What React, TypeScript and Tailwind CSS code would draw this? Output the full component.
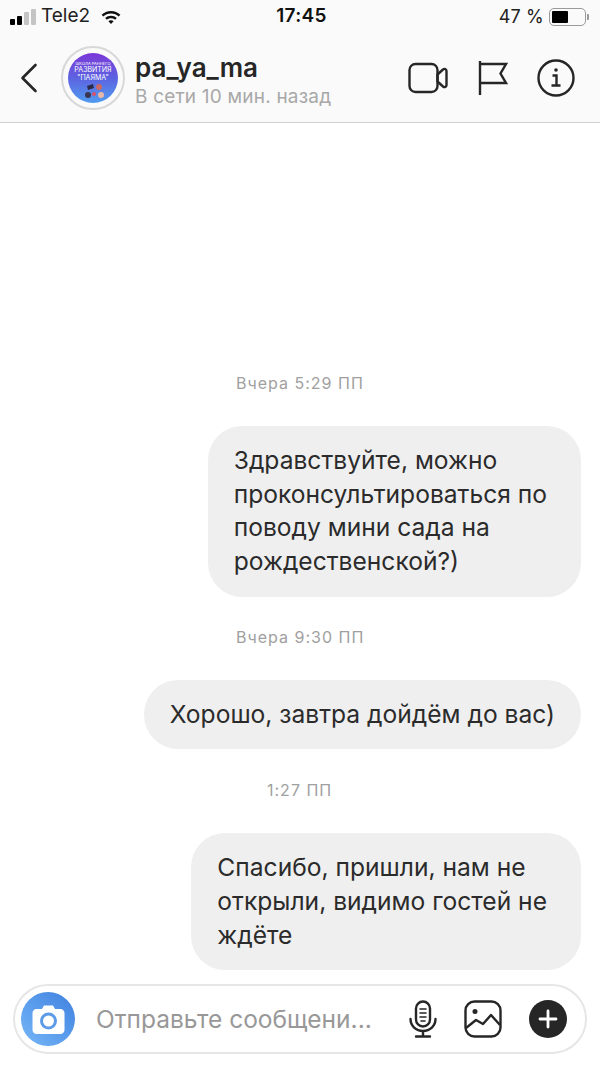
const FONT = "font-['Inter','Liberation_Sans',sans-serif]"

function Signal() {
  return (
    <div className="flex items-end gap-[2px]">
      <div className="w-[5px] h-[6px] rounded-[1px] bg-black" />
      <div className="w-[5px] h-[9px] rounded-[1px] bg-black" />
      <div className="w-[5px] h-[13px] rounded-[1px] bg-[#c4c4c4]" />
      <div className="w-[5px] h-[16px] rounded-[1px] bg-[#c4c4c4]" />
    </div>
  )
}

function Wifi() {
  return (
    <svg width="22" height="16" viewBox="0 0 22 16" fill="#111">
      <path d="M11 2c3.600 0 6.900 1.400 9.400 3.700l-1.700 1.800C16.700 5.600 14 4.500 11 4.500S5.300 5.600 3.300 7.500L1.600 5.700C4.100 3.400 7.400 2 11 2z" />
      <path d="M11 6.800c2.200 0 4.200.8 5.800 2.200l-1.700 1.800c-1.100-1-2.500-1.500-4.100-1.500s-3 .5-4.100 1.500L5.200 9C6.800 7.600 8.800 6.800 11 6.800z" />
      <path d="M11 11.300c1 0 1.900.4 2.600 1L11 15l-2.600-2.700c.7-.6 1.600-1 2.600-1z" />
    </svg>
  )
}

function StatusBar() {
  return (
    <div className="h-[33px] grid grid-cols-3 items-center pl-[10px] pr-[11px]">
      <div className="flex items-center gap-[5px]">
        <Signal />
        <span className="text-[19px] text-[#222]">Tele2</span>
        <div className="ml-[5px]"><Wifi /></div>
      </div>
      <span className="text-center pl-[4px] text-[19px] font-semibold text-[#111] tracking-[0.3px]">17:45</span>
      <div className="flex items-center justify-end gap-[5px]">
        <span className="text-[18px] text-[#222] tracking-[0.2px]">47 %</span>
        <div className="flex items-center gap-[1px]">
          <div className="w-[37px] h-[18px] rounded-[5px] border border-[#9a9a9a] p-[2px]">
            <div className="w-[16px] h-full rounded-[1px] bg-black" />
          </div>
          <div className="w-[2px] h-[6px] rounded-r-[1px] bg-[#9a9a9a]" />
        </div>
      </div>
    </div>
  )
}

function Avatar() {
  return (
    <div className="w-[64px] h-[64px] rounded-full border-2 border-[#d8d8d8] flex items-center justify-center shrink-0">
      <div className="w-[50px] h-[50px] rounded-full bg-gradient-to-b from-[#7a35d8] via-[#5b62e0] to-[#4f9cf0] flex flex-col items-center pt-[8px] text-white overflow-hidden">
        <span className="text-[4px] leading-[5px] whitespace-nowrap">ШКОЛА РАННЕГО</span>
        <span className="text-[7px] leading-[8px] whitespace-nowrap">РАЗВИТИЯ</span>
        <span className="text-[7px] leading-[8px] whitespace-nowrap">"ПАЯМА"</span>
        <svg width="30" height="16" viewBox="0 0 30 16" className="mt-[1px]">
          <circle cx="10" cy="12" r="3" fill="#3a3550" />
          <circle cx="16" cy="11" r="2" fill="#d9506a" />
          <circle cx="23" cy="12" r="3" fill="#e7b8a8" />
          <path d="M9 3l6-2 1 4-6 2z" fill="#2c2a48" />
          <circle cx="21" cy="4" r="3" fill="#c76a6a" />
        </svg>
      </div>
    </div>
  )
}

function Header() {
  return (
    <div className="h-[90px] flex items-start border-b border-[#cfcfcf] pl-[20px] pr-[25px] pt-[13px]">
      <svg width="18" height="32" viewBox="0 0 18 32" fill="none" stroke="#262626" strokeWidth="2.600" strokeLinecap="round" strokeLinejoin="round" className="mt-[16px] mr-[23px] shrink-0">
        <path d="M15.500 3 2.500 16l13 13" />
      </svg>
      <Avatar />
      <div className="ml-[10px] flex-1 min-w-0">
        <p className="text-[26px] leading-[32px] mt-[6px] font-semibold text-[#262626]">pa_ya_ma</p>
        <p className="text-[19px] leading-[24px] mt-[1px] text-[#a8a8a8] tracking-[0.2px] whitespace-nowrap">В сети 10 мин. назад</p>
      </div>
      <div className="flex items-center mt-[6px] h-[52px]">
        <svg width="40" height="32" viewBox="0 0 40 32" fill="none" stroke="#262626" strokeWidth="2.400" strokeLinejoin="round">
          <rect x="1.500" y="2" width="28" height="28" rx="6" />
          <path d="M29.500 12.500 35 7.500c1.500-1.200 3.500-.5 3.500 1.500v14c0 2-2 2.700-3.500 1.500l-5.500-5z" />
        </svg>
        <svg width="30" height="34" viewBox="0 0 30 34" fill="none" stroke="#262626" strokeWidth="2.400" className="ml-[30px]">
          <path d="M2 0v34M2 3h26l-5.500 9.500L28 22H2" />
        </svg>
        <svg width="38" height="38" viewBox="0 0 38 38" fill="none" stroke="#262626" strokeWidth="2.400" className="ml-[29px]">
          <circle cx="19" cy="19" r="17.500" />
          <circle cx="19" cy="11" r="1.800" fill="#262626" stroke="none" />
          <path d="M15.500 16.500h4v10M14.500 26.500h9" />
        </svg>
      </div>
    </div>
  )
}

function Time({ label, className }: { label: string; className: string }) {
  return <p className={`text-[16px] leading-[20px] tracking-[1px] text-[#a0a0a0] ${className}`}>{label}</p>
}

function Bubble({ lines, className }: { lines: string[]; className: string }) {
  return (
    <div className={`self-end rounded-[34px] bg-[#efefef] pl-[26px] py-[18px] text-[24.600px] leading-[33.670px] text-[#2b2b2b] ${className}`}>
      {lines.map((l) => (
        <p key={l} className="whitespace-nowrap">{l}</p>
      ))}
    </div>
  )
}

function Composer() {
  return (
    <div className="mx-[13px] mt-[14px] h-[70px] rounded-[35px] border-2 border-[#e6e6e6] flex items-center pl-[6px] pr-[18px]">
      <div className="w-[54px] h-[54px] rounded-full bg-gradient-to-tr from-[#76b7f8] to-[#3f80df] flex items-center justify-center shrink-0">
        <svg width="33" height="29" viewBox="0 0 33 29">
          <path d="M4.500 4H10l2-3.500h9L23 4h5.500c2.200 0 4 1.800 4 4v17c0 2.200-1.800 4-4 4h-24c-2.200 0-4-1.800-4-4V8c0-2.200 1.800-4 4-4z" fill="#fff" />
          <circle cx="16.500" cy="16" r="7" fill="none" stroke="#5d9be8" strokeWidth="3" />
        </svg>
      </div>
      <span className="ml-[21px] flex-1 text-[24.500px] text-[#989898] whitespace-nowrap">Отправьте сообщени...</span>
      <svg width="28" height="38" viewBox="0 0 28 38" fill="none" stroke="#262626" strokeWidth="2.400" strokeLinecap="round">
        <rect x="7" y="1.500" width="14" height="25" rx="7" />
        <path d="M1.500 19c0 7 5.500 12 12.500 12s12.500-5 12.500-12M14 31v5M7 36.500h14" />
        <path d="M11 9h6M11 13h6M11 17h6M12 21h4" strokeWidth="1.600" />
      </svg>
      <svg width="38" height="38" viewBox="0 0 38 38" fill="none" stroke="#262626" strokeWidth="2.400" strokeLinejoin="round" className="ml-[27px]">
        <rect x="1.500" y="1.500" width="35" height="35" rx="9" />
        <circle cx="11" cy="11.500" r="2.500" fill="#262626" stroke="none" />
        <path d="M2 28 12 20l7 4 8-9 9 10" />
      </svg>
      <div className="ml-[27px] w-[38px] h-[38px] rounded-full bg-[#262626] flex items-center justify-center">
        <svg width="20" height="20" viewBox="0 0 20 20" stroke="#fff" strokeWidth="2.800" strokeLinecap="round">
          <path d="M10 2v16M2 10h16" />
        </svg>
      </div>
    </div>
  )
}

export default function App() {
  return (
    <div className={`w-[600px] h-[1066px] bg-white flex flex-col overflow-hidden ${FONT}`}>
      <div className="bg-[#fafafa]">
        <StatusBar />
        <Header />
      </div>
      <div className="flex-1 flex flex-col pr-[19px]">
        <Time label="Вчера 5:29 ПП" className="ml-[236px] mt-[250px]" />
        <Bubble className="mt-[33px] pr-[34px]" lines={["Здравствуйте, можно", "проконсультироваться по", "поводу мини сада на", "рождественской?)"]} />
        <Time label="Вчера 9:30 ПП" className="ml-[236px] mt-[30px]" />
        <Bubble className="mt-[33px] pr-[26px]" lines={["Хорошо, завтра дойдём до вас)"]} />
        <Time label="1:27 ПП" className="ml-[267px] mt-[31px]" />
        <Bubble className="mt-[33px] pr-[34px]" lines={["Спасибо, пришли, нам не", "открыли, видимо гостей не", "ждёте"]} />
      </div>
      <Composer />
      <div className="h-[12px] shrink-0" />
    </div>
  )
}
